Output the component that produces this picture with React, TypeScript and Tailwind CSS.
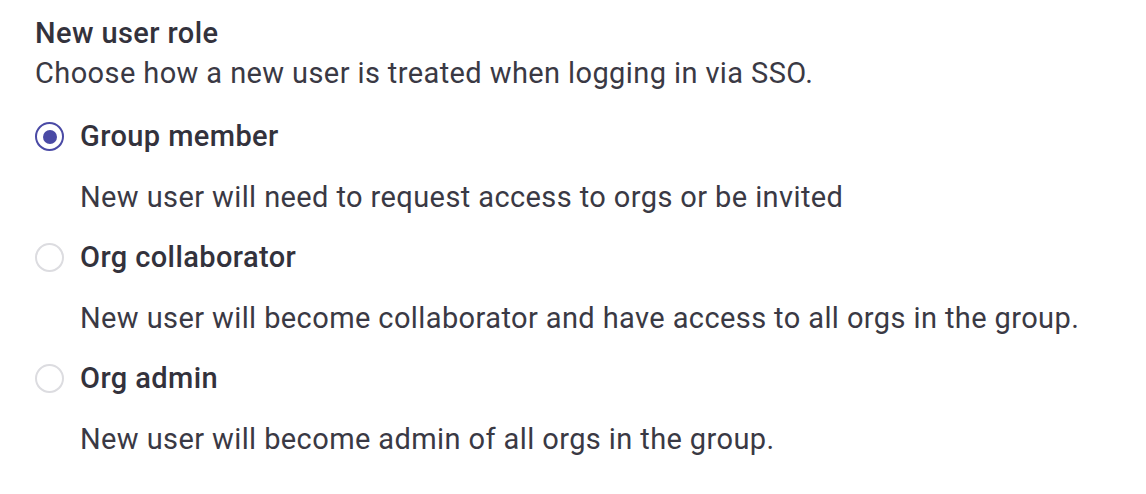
import React, { useState } from "react";

type RoleOption = {
  id: string;
  label: string;
  description: string;
};

const options: RoleOption[] = [
  {
    id: "member",
    label: "Group member",
    description: "New user will need to request access to orgs or be invited",
  },
  {
    id: "collaborator",
    label: "Org collaborator",
    description: "New user will become collaborator and have access to all orgs in the group.",
  },
  {
    id: "admin",
    label: "Org admin",
    description: "New user will become admin of all orgs in the group.",
  },
];

const App = () => {
  const [selected, setSelected] = useState("member");

  return (
    <div
      className="w-[1146px] h-[494px] bg-white px-[35px] pt-[14px] text-[#393842] tracking-[0.4px]"
      style={{ fontFamily: "Roboto, 'Noto Sans', sans-serif" }}
    >
      <h2 className="text-[29px] leading-[38px] font-medium text-[#33323c]">New user role</h2>
      <p className="text-[29px] leading-[42px] text-[#3a3944]">
        Choose how a new user is treated when logging in via SSO.
      </p>

      <div className="mt-[13px] flex flex-col">
        {options.map((opt) => {
          const isOn = selected === opt.id;
          return (
            <label key={opt.id} className="flex flex-col cursor-pointer" onClick={() => setSelected(opt.id)}>
              <div className="flex items-center h-[60px]">
                <span
                  className={
                    isOn
                      ? "flex items-center justify-center w-[29px] h-[29px] -mt-[1px] rounded-full border-2 border-[#4a4aa5]"
                      : "flex items-center justify-center w-[29px] h-[29px] -mt-[1px] rounded-full border-2 border-[#dcdce0]"
                  }
                >
                  {isOn && <span className="w-[14px] h-[14px] rounded-full bg-[#4a4aa5]" />}
                </span>
                <span className="ml-[16px] text-[29px] font-medium text-[#33323c]">{opt.label}</span>
              </div>
              <p className="pl-[45px] h-[61px] flex items-center text-[29px] text-[#3a3944]">
                {opt.description}
              </p>
            </label>
          );
        })}
      </div>
    </div>
  );
};

export default App;
